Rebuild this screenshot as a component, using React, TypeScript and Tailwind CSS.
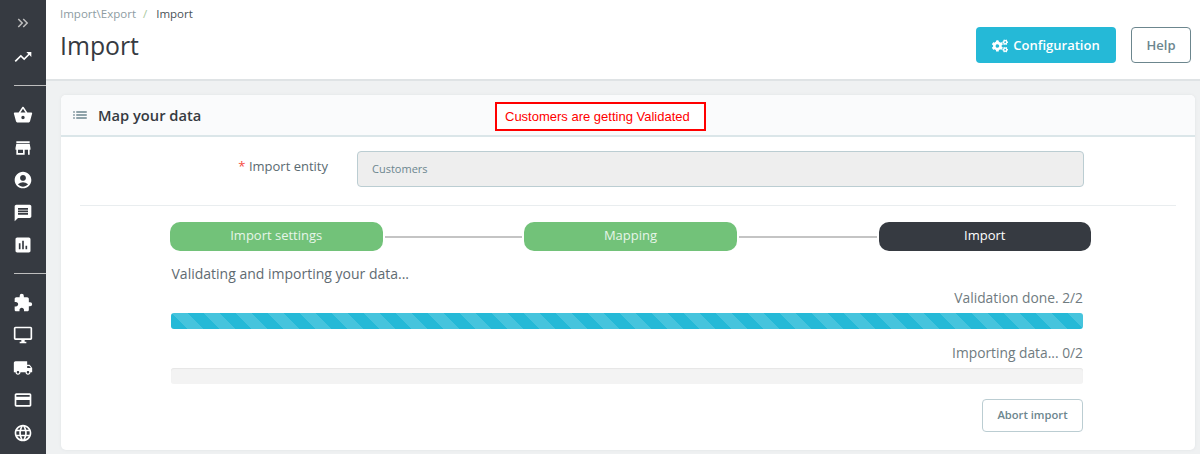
import { FaCogs } from "react-icons/fa";
import {
  MdAccountCircle,
  MdAssessment,
  MdCreditCard,
  MdKeyboardDoubleArrowRight,
  MdLanguage,
  MdList,
  MdLocalShipping,
  MdMessage,
  MdOutlineDesktopWindows,
  MdExtension,
  MdShoppingBasket,
  MdStore,
  MdTrendingUp,
} from "react-icons/md";

const GROUP_ONE = [MdShoppingBasket, MdStore, MdAccountCircle, MdMessage, MdAssessment];
const GROUP_TWO = [MdExtension, MdOutlineDesktopWindows, MdLocalShipping, MdCreditCard, MdLanguage];

function NavIcon({ icon: Icon }: { icon: typeof MdStore }) {
  return (
    <div className="flex h-[32.5px] w-full items-center justify-center pr-[1px] text-white">
      <Icon className="h-[20px] w-[20px]" />
    </div>
  );
}

function Sidebar() {
  return (
    <aside className="flex h-[454px] w-[46px] shrink-0 flex-col bg-[#363a41] pt-[6px]">
      <div className="flex h-[34.5px] items-center justify-center pr-[1px] text-[#bebebe]">
        <MdKeyboardDoubleArrowRight className="h-[18px] w-[18px]" />
      </div>
      <NavIcon icon={MdTrendingUp} />
      <div className="mt-[12px] mb-[13px] ml-[14px] h-px bg-[#bebebe]" />
      {GROUP_ONE.map((icon, i) => (
        <NavIcon key={i} icon={icon} />
      ))}
      <div className="mt-[11px] mb-[13px] ml-[14px] h-px bg-[#bebebe]" />
      {GROUP_TWO.map((icon, i) => (
        <NavIcon key={i} icon={icon} />
      ))}
    </aside>
  );
}

function Step({ label, active }: { label: string; active?: boolean }) {
  return (
    <div
      className={
        "flex h-[29px] w-[212.5px] shrink-0 items-center justify-center rounded-[10px] pb-[2px] text-[13px] " +
        (active ? "bg-[#363a41] text-white" : "bg-[#72c279] text-[#e6f5e8]")
      }
    >
      {label}
    </div>
  );
}

function Connector() {
  return <div className="mx-[2px] h-[2px] flex-1 bg-[#c4c4c4]" />;
}

export default function App() {
  return (
    <div className="flex h-[454px] w-[1200px] overflow-hidden bg-[#eff1f2] font-['Open_Sans',sans-serif] text-[#6c868e]">
      <Sidebar />
      <main className="min-w-0 flex-1">
        {/* header */}
        <header className="flex h-[81px] items-start justify-between border-b-2 border-[#dfe3e5] bg-white pl-[14px] pr-[9px]">
          <div>
            <div className="mt-[5px] flex h-[18px] items-center text-[11.5px] text-[#8d9ca2]">
              <span>Import\Export</span>
              <span className="ml-[7px] mr-[9px] text-[#a9c8a0]">/</span>
              <span className="text-[#4a5257]">Import</span>
            </div>
            <h1 className="mt-[4px] text-[24.8px] leading-[36px] text-[#363a41]">Import</h1>
          </div>
          <div className="mt-[27px] flex items-center gap-[15px]">
            <button className="flex h-[36px] w-[140px] items-center justify-center gap-[5px] rounded-[4px] bg-[#25b9d7] pt-[2px] text-[13px] font-semibold text-white">
              <FaCogs className="h-[16px] w-[16px]" />
              Configuration
            </button>
            <button className="h-[36px] w-[60px] rounded-[4px] border border-[#6c868e] bg-white pt-[2px] text-[13px] font-semibold text-[#6c868e]">
              Help
            </button>
          </div>
        </header>

        {/* card */}
        <section className="relative mt-[14px] ml-[15px] h-[355px] w-[1134px] rounded-[5px] bg-white shadow-[0_0_3px_#dfe3e5]">
          <div className="flex h-[42px] items-center gap-[9px] rounded-t-[5px] border-b-2 border-[#dbe6e9] bg-[#fafbfc] pl-[10px]">
            <MdList className="h-[18px] w-[18px] text-[#6c868e]" />
            <h2 className="text-[14.7px] font-semibold text-[#363a41]">Map your data</h2>
          </div>

          {/* annotation */}
          <div className="absolute top-[7px] left-[434px] flex h-[29px] w-[211px] items-center border-2 border-[#ff0000] bg-white pl-[8px] font-['Liberation_Sans',sans-serif] text-[13px] text-[#ff0000]">
            Customers are getting Validated
          </div>

          <div className="px-[19px]">
            <div className="flex h-[69px] items-start border-b border-[#e9edef]">
              <label className="mt-[20px] w-[250px] pr-[2px] text-right text-[13px] leading-[18px] text-[#5a6a71]">
                <span className="text-[#f54c3e]">* </span>Import entity
              </label>
              <div className="mt-[14px] ml-[27px] flex h-[36px] w-[727px] items-center rounded-[4px] border border-[#bbcdd2] bg-[#eeeeee] pl-[14px] text-[11px] text-[#6c868e]">
                Customers
              </div>
            </div>

            <div className="mx-[90px] mt-[16px] w-[921px]">
              <div className="flex items-center">
                <Step label="Import settings" />
                <Connector />
                <Step label="Mapping" />
                <Connector />
                <Step label="Import" active />
              </div>

              <p className="mt-[13px] ml-[1.5px] text-[14px] leading-[19px] text-[#5f6b72]">
                Validating and importing your data...
              </p>

              <div className="mr-[8px] ml-px">
                <p className="mt-[5px] text-right text-[13.8px] leading-[19px] text-[#6f7b80]">Validation done. 2/2</p>
                <div className="mt-[6px] h-[16px] rounded-[3px] bg-[#25b9d7] bg-[linear-gradient(45deg,#46c4dd_25%,transparent_25%,transparent_50%,#46c4dd_50%,#46c4dd_75%,transparent_75%,transparent)] bg-[length:32px_32px]" />
                <p className="mt-[14px] text-right text-[13.8px] leading-[19px] text-[#6f7b80]">Importing data... 0/2</p>
                <div className="mt-[6px] h-[16px] rounded-[3px] bg-[#f3f3f3] shadow-[inset_0_1px_1px_#e6e6e6]" />
                <div className="mt-[15px] flex justify-end">
                  <button className="h-[33px] w-[101px] rounded-[4px] border border-[#bbcdd2] bg-white text-[11.2px] font-semibold text-[#6c868e]">
                    Abort import
                  </button>
                </div>
              </div>
            </div>
          </div>
        </section>
      </main>
    </div>
  );
}
